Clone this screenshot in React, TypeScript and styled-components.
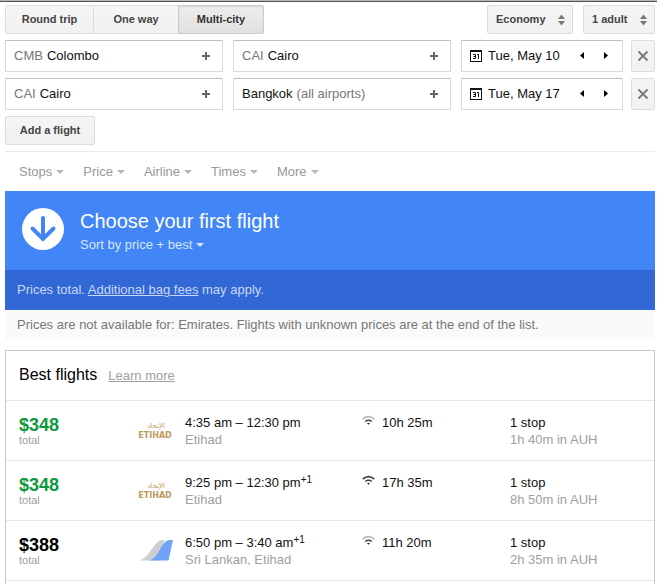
import React from "react";
import styled, { createGlobalStyle, css } from "styled-components";

const GlobalStyle = createGlobalStyle`
  *, *::before, *::after { box-sizing: border-box; }
  body {
    margin: 0;
    background: #fff;
    color: #111;
    font-family: "Liberation Sans", Arial, Helvetica, sans-serif;
    font-size: 13px;
    line-height: 17px;
  }
  button, input, select { font: inherit; color: inherit; margin: 0; }
  button { cursor: pointer; }
`;

const TopEdge = styled.div`
  height: 2px;
  background: #b8b8b8;
  border-bottom: 1px solid #555;
`;

const Page = styled.main`
  padding: 3px 2px 0 5px;
`;

const SearchForm = styled.form`
  display: flex;
  flex-direction: column;
  gap: 6px;
  padding-bottom: 6px;
  border-bottom: 1px solid #ebebeb;
`;

const Toolbar = styled.div`
  display: flex;
  gap: 10px;
`;

const raised = css`
  height: 29px;
  border: 1px solid #dcdcdc;
  border-radius: 2px;
  background: linear-gradient(#f5f5f5, #f1f1f1);
  color: #444;
  font-size: 11px;
  font-weight: bold;
`;

const TripTabs = styled.div`
  display: flex;
  margin-right: auto;
`;

const TripTab = styled.button<{ $active?: boolean }>`
  ${raised}
  padding: 0 14px;
  min-width: 86px;
  border-radius: 0;
  & + & { margin-left: -1px; }
  &:first-child { min-width: 89px; border-radius: 2px 0 0 2px; }
  &:last-child { border-radius: 0 2px 2px 0; }
  ${(p) =>
    p.$active &&
    css`
      border-color: #ccc;
      background: linear-gradient(#eee, #e0e0e0);
      box-shadow: inset 0 1px 2px rgba(0, 0, 0, 0.1);
      color: #333;
    `}
`;

const SelectWrap = styled.label`
  display: grid;
  align-items: center;
  > * { grid-area: 1 / 1; }
  > svg { justify-self: end; margin-right: 8px; pointer-events: none; }
`;

const Select = styled.select`
  ${raised}
  appearance: none;
  padding: 0 26px 0 8px;
`;

const AddButton = styled.button`
  ${raised}
  align-self: flex-start;
  min-width: 90px;
`;

const Leg = styled.div`
  display: flex;
  gap: 8px;
`;

const LegFields = styled.div`
  flex: 1;
  display: grid;
  grid-template-columns: 1fr 1fr 162px;
  gap: 10px;
`;

const Field = styled.div`
  display: flex;
  align-items: center;
  min-width: 0;
  height: 32px;
  padding: 0 8px 1px;
  border: 1px solid #d9d9d9;
  border-top-color: #c0c0c0;
`;

const FieldLabel = styled.label`
  display: flex;
  flex: 1;
  align-items: center;
  gap: 4px;
  min-width: 0;
`;

const Muted = styled.span`
  color: #777;
  white-space: nowrap;
`;

const TextInput = styled.input`
  field-sizing: content;
  min-width: 0;
  height: 17px;
  padding: 0;
  border: 0;
  outline: 0;
  background: none;
  color: #111;
`;

const DateInput = styled(TextInput)`
  margin-left: 2px;
  width: 80px;
  field-sizing: fixed;
`;

const IconButton = styled.button`
  display: flex;
  align-items: center;
  justify-content: center;
  width: 16px;
  height: 20px;
  padding: 0;
  border: 0;
  background: none;
`;

const DateSteps = styled.div`
  display: flex;
  gap: 8px;
`;

const RemoveButton = styled.button`
  ${raised}
  display: flex;
  align-items: center;
  justify-content: center;
  width: 24px;
  height: 32px;
  padding: 0;
`;

const Filters = styled.nav`
  display: flex;
  align-items: center;
  gap: 19px;
  height: 39px;
  padding-left: 14px;
`;

const MenuButton = styled.button<{ $light?: boolean }>`
  display: inline-flex;
  align-items: center;
  gap: 4px;
  padding: 0;
  border: 0;
  background: none;
  color: ${(p) => (p.$light ? "#d6e4ff" : "#999")};
`;

const Caret = styled.span<{ $light?: boolean }>`
  border: 4px solid transparent;
  border-top-color: ${(p) => (p.$light ? "#d6e4ff" : "#b5b5b5")};
  border-bottom: 0;
`;

const Banner = styled.header`
  display: flex;
  align-items: center;
  gap: 16px;
  height: 79px;
  padding: 0 17px 3px;
  background: #4285f6;
`;

const Title = styled.h1`
  margin: 0;
  color: #fff;
  font-size: 20px;
  line-height: 26px;
  font-weight: normal;
`;

const BannerText = styled.div`
  display: flex;
  flex-direction: column;
  align-items: flex-start;
  gap: 2px;
  padding-top: 3px;
`;

const FeeBar = styled.p`
  margin: 0;
  padding: 11px 12px 12px;
  background: #3267d6;
  color: #c8d7f6;
  a { color: inherit; }
`;

const Notice = styled.p`
  margin: 0 0 10px;
  padding: 6px 12px 7px;
  background: #fafafa;
  color: #777;
`;

const Results = styled.section`
  padding-bottom: 3px;
  border: 1px solid #c8c8c8;
  border-bottom: 0;
`;

const ResultsHead = styled.div`
  display: flex;
  align-items: baseline;
  gap: 11px;
  padding: 12px 13px 0;
  height: 49px;
`;

const Heading = styled.h2`
  margin: 0;
  color: #000;
  font-size: 16px;
  line-height: 24px;
  font-weight: normal;
`;

const LearnMore = styled.a`
  color: #a0a0a0;
`;

const FlightTable = styled.table`
  width: 100%;
  table-layout: fixed;
  border-collapse: collapse;
  border-bottom: 1px solid #e6e6e6;
`;

const FlightRow = styled.tr`
  height: 60px;
  border-top: 1px solid #e6e6e6;
`;

const Cell = styled.td<{ $w?: number; $inset?: number }>`
  width: ${(p) => (p.$w ? p.$w + "px" : "auto")};
  padding: 13px 0 0 ${(p) => p.$inset ?? 0}px;
  vertical-align: top;
  white-space: nowrap;
`;

const LogoCell = styled(Cell)`
  padding-top: 17px;
  > svg { display: block; }
`;

const Price = styled.div<{ $best: boolean }>`
  color: ${(p) => (p.$best ? "#0b9a3a" : "#000")};
  font-size: 18px;
  line-height: 22px;
  font-weight: bold;
`;

const PriceNote = styled.div`
  color: #a0a0a0;
  font-size: 11px;
  line-height: 8px;
`;

const Detail = styled.div`
  color: #a0a0a0;
`;

const DayShift = styled.sup`
  font-size: 10px;
  line-height: 0;
  vertical-align: 4px;
`;

const Duration = styled.div`
  display: flex;
  gap: 7px;
  > svg { margin-top: 1px; }
`;

const PlusIcon = () => (
  <svg width="10" height="10" viewBox="0 0 10 10" aria-hidden="true">
    <path d="M5 1v8M1 5h8" stroke="#666" strokeWidth="2" />
  </svg>
);

const UpDownIcon = () => (
  <svg width="7" height="12" viewBox="0 0 7 12" aria-hidden="true">
    <path d="M0 5l3.5-4.5L7 5zM0 7l3.5 4.5L7 7z" fill="#777" />
  </svg>
);

const CrossIcon = () => (
  <svg width="12" height="12" viewBox="0 0 12 12" aria-hidden="true">
    <path d="M1.5 1.5l9 9M10.500 1.500l-9 9" stroke="#777" strokeWidth="1.8" />
  </svg>
);

const CalendarIcon = () => (
  <svg width="12" height="12" viewBox="0 0 12 12" aria-hidden="true">
    <rect x="0.5" y="0.5" width="11" height="11" fill="#fff" stroke="#111" />
    <path d="M0 1h12" stroke="#111" strokeWidth="2" />
    <path d="M3 4.500h2.500v4H3M3.500 6.500h2M7 4.500h1.500V9" fill="none" stroke="#111" />
  </svg>
);

const StepIcon = ({ back }: { back?: boolean }) => (
  <svg width="4" height="7" viewBox="0 0 4 7" aria-hidden="true">
    <path d={back ? "M4 0v7L0 3.500z" : "M0 0v7l4-3.500z"} fill="#000" />
  </svg>
);

const DownArrowIcon = () => (
  <svg width="42" height="42" viewBox="0 0 42 42" aria-hidden="true">
    <circle cx="21" cy="21" r="21" fill="#fff" />
    <path
      d="M21 10v20M10.500 20.500L21 31l10.500-10.500"
      fill="none"
      stroke="#4285f6"
      strokeWidth="4"
      strokeLinecap="round"
    />
  </svg>
);

const WifiIcon = ({ weak }: { weak: boolean }) => (
  <svg width="13" height="11" viewBox="0 0 13 11" fill="none" aria-hidden="true">
    <path d="M.8 4Q6.500-.6 12.200 4" stroke={weak ? "#b5b5b5" : "#444"} strokeWidth="1.700" />
    <path d="M3.200 6.500q3.300-2.600 6.600 0" stroke="#444" strokeWidth="1.500" />
    <path d="M5 8.200q1.500-.9 3 0L6.500 9.800z" fill="#333" />
  </svg>
);

const EtihadLogo = () => (
  <svg width="37" height="24" viewBox="0 0 37 24" role="img" aria-label="Etihad">
    <g fill="#bd9b60" fontFamily="DejaVu Sans, sans-serif" textAnchor="middle">
      <text x="19" y="10" fontSize="7">الإتحاد</text>
      <text x="18" y="20" fontSize="8" fontWeight="bold">ETIHAD</text>
    </g>
  </svg>
);

const TailLogo = () => (
  <svg width="37" height="24" viewBox="0 0 37 24" role="img" aria-label="Multiple airlines">
    <path d="M1.500 22.500C8 21.500 12 15 17 8q4-6 8-6h2.500L23 22.500z" fill="#cdcfd1" />
    <path d="M11.500 22.500C18 21.500 21 15 25 8q3.500-6 7.500-6H36L31.500 22.500z" fill="#70a3f8" />
  </svg>
);

type Place = { code?: string; city: string; note?: string };
const legs: { from: Place; to: Place; date: string }[] = [
  { from: { code: "CMB", city: "Colombo" }, to: { code: "CAI", city: "Cairo" }, date: "Tue, May 10" },
  { from: { code: "CAI", city: "Cairo" }, to: { city: "Bangkok", note: "(all airports)" }, date: "Tue, May 17" },
];

const flights = [
  { price: "$348", best: true, time: "4:35 am – 12:30 pm", shift: "", airline: "Etihad", weak: true, duration: "10h 25m", layover: "1h 40m in AUH", mixed: false },
  { price: "$348", best: true, time: "9:25 pm – 12:30 pm", shift: "+1", airline: "Etihad", weak: false, duration: "17h 35m", layover: "8h 50m in AUH", mixed: false },
  { price: "$388", best: false, time: "6:50 pm – 3:40 am", shift: "+1", airline: "Sri Lankan, Etihad", weak: true, duration: "11h 20m", layover: "2h 35m in AUH", mixed: true },
];

const PlaceField = ({ place, label }: { place: Place; label: string }) => (
  <Field>
    <FieldLabel>
      {place.code && <Muted>{place.code}</Muted>}
      <TextInput aria-label={label} defaultValue={place.city} />
      {place.note && <Muted>{place.note}</Muted>}
    </FieldLabel>
    <IconButton type="button" aria-label={`Add another airport: ${label}`}>
      <PlusIcon />
    </IconButton>
  </Field>
);

export default function App() {
  return (
    <>
      <GlobalStyle />
      <TopEdge />
      <Page>
        <SearchForm>
          <Toolbar>
            <TripTabs>
              <TripTab type="button">Round trip</TripTab>
              <TripTab type="button">One way</TripTab>
              <TripTab type="button" $active aria-pressed="true">Multi-city</TripTab>
            </TripTabs>
            <SelectWrap>
              <Select aria-label="Cabin class"><option>Economy</option></Select>
              <UpDownIcon />
            </SelectWrap>
            <SelectWrap>
              <Select aria-label="Passengers"><option>1 adult</option></Select>
              <UpDownIcon />
            </SelectWrap>
          </Toolbar>
          {legs.map((leg, i) => (
            <Leg key={i}>
              <LegFields>
                <PlaceField place={leg.from} label={`From, flight ${i + 1}`} />
                <PlaceField place={leg.to} label={`To, flight ${i + 1}`} />
                <Field>
                  <FieldLabel>
                    <CalendarIcon />
                    <DateInput aria-label={`Date, flight ${i + 1}`} defaultValue={leg.date} />
                  </FieldLabel>
                  <DateSteps>
                    <IconButton type="button" aria-label="Previous day"><StepIcon back /></IconButton>
                    <IconButton type="button" aria-label="Next day"><StepIcon /></IconButton>
                  </DateSteps>
                </Field>
              </LegFields>
              <RemoveButton type="button" aria-label={`Remove flight ${i + 1}`}><CrossIcon /></RemoveButton>
            </Leg>
          ))}
          <AddButton type="button">Add a flight</AddButton>
        </SearchForm>

        <Filters aria-label="Filters">
          {["Stops", "Price", "Airline", "Times", "More"].map((name) => (
            <MenuButton key={name} type="button">{name}<Caret /></MenuButton>
          ))}
        </Filters>

        <Banner>
          <DownArrowIcon />
          <BannerText>
            <Title>Choose your first flight</Title>
            <MenuButton type="button" $light>Sort by price + best<Caret $light /></MenuButton>
          </BannerText>
        </Banner>
        <FeeBar>Prices total. <a href="#fees">Additional bag fees</a> may apply.</FeeBar>
        <Notice>
          Prices are not available for: Emirates. Flights with unknown prices are at the end of the list.
        </Notice>

        <Results>
          <ResultsHead>
            <Heading>Best flights</Heading>
            <LearnMore href="#learn">Learn more</LearnMore>
          </ResultsHead>
          <FlightTable aria-label="Best flights">
            <tbody>
              {flights.map((f, i) => (
                <FlightRow key={i}>
                  <Cell $w={131} $inset={13}>
                    <Price $best={f.best}>{f.price}</Price>
                    <PriceNote>total</PriceNote>
                  </Cell>
                  <LogoCell $w={48}>{f.mixed ? <TailLogo /> : <EtihadLogo />}</LogoCell>
                  <Cell $w={177}>
                    {f.time}{f.shift && <DayShift>{f.shift}</DayShift>}
                    <Detail>{f.airline}</Detail>
                  </Cell>
                  <Cell $w={148}>
                    <Duration><WifiIcon weak={f.weak} />{f.duration}</Duration>
                  </Cell>
                  <Cell>
                    1 stop
                    <Detail>{f.layover}</Detail>
                  </Cell>
                </FlightRow>
              ))}
            </tbody>
          </FlightTable>
        </Results>
      </Page>
    </>
  );
}
